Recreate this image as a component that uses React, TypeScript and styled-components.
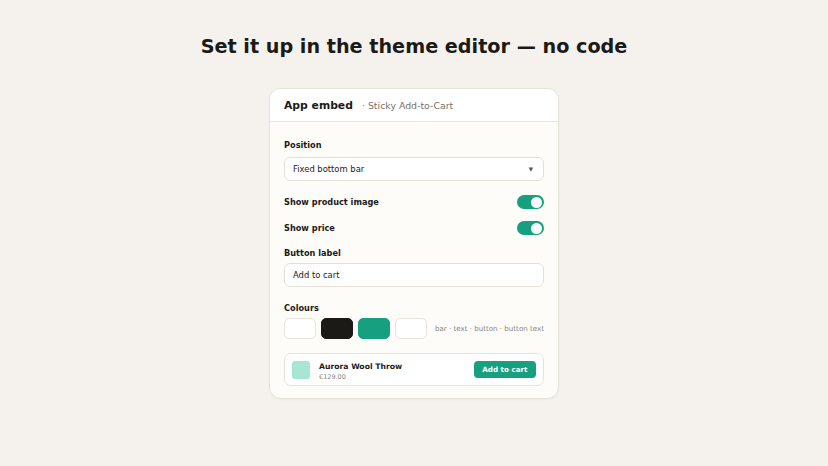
import React from "react";
import styled, { createGlobalStyle } from "styled-components";

const Global = createGlobalStyle`
  html, body { margin: 0; padding: 0; }
  body {
    background: #f5f2ed;
    font-family: "DejaVu Sans", Verdana, sans-serif;
    color: #1c1a17;
  }
`;

const Page = styled.div`
  width: 828px;
  height: 466px;
  display: flex;
  flex-direction: column;
  align-items: center;
  box-sizing: border-box;
  padding-top: 36px;
`;

const Title = styled.h1`
  margin: 0 0 30px;
  font-size: 19.2px;
  line-height: 22px;
  font-weight: 700;
  color: #1c1a17;
`;

const Card = styled.div`
  width: 290px;
  box-sizing: border-box;
  border: 1px solid #e7e2d9;
  border-radius: 12px;
  background: #fdfcf8;
  overflow: hidden;
  box-shadow: 0 1px 2px rgba(0, 0, 0, 0.03);
`;

const Header = styled.div`
  display: flex;
  align-items: center;
  gap: 9px;
  height: 32px;
  padding: 0 14px;
  background: #ffffff;
  border-bottom: 1px solid #ece7de;
`;

const HeaderTitle = styled.span`
  font-size: 10.8px;
  font-weight: 700;
`;

const HeaderSub = styled.span`
  font-size: 9.4px;
  color: #77726a;
`;

const Body = styled.div`
  display: flex;
  flex-direction: column;
  padding: 18px 14px 12px;
`;

const Label = styled.div<{ $gap?: number }>`
  font-size: 8.2px;
  font-weight: 700;
  line-height: 11px;
  margin-bottom: ${(p) => p.$gap ?? 6}px;
`;

const Field = styled.div<{ $after?: number }>`
  display: flex;
  align-items: center;
  justify-content: space-between;
  height: 24px;
  box-sizing: border-box;
  padding: 0 10px 0 8px;
  border: 1px solid #e5e0d7;
  border-radius: 6px;
  background: #ffffff;
  font-size: 8.4px;
  color: #1c1a17;
  margin-bottom: ${(p) => p.$after ?? 12}px;
`;

const Caret = styled.span`
  font-size: 5.5px;
  color: #555;
`;

const ToggleRow = styled.div<{ $after?: number }>`
  display: flex;
  align-items: center;
  justify-content: space-between;
  height: 14px;
  margin-bottom: ${(p) => p.$after ?? 12}px;
  font-size: 8.2px;
  font-weight: 700;
`;

const Toggle = styled.span`
  position: relative;
  width: 27px;
  height: 14px;
  border-radius: 7px;
  background: #17a080;

  &::after {
    content: "";
    position: absolute;
    right: 2px;
    top: 1.5px;
    width: 11px;
    height: 11px;
    border-radius: 50%;
    background: #ffffff;
  }
`;

const SwatchRow = styled.div`
  display: flex;
  align-items: center;
  gap: 5px;
  margin-bottom: 14px;
`;

const Swatch = styled.span<{ $color: string }>`
  width: 32px;
  height: 21px;
  box-sizing: border-box;
  border-radius: 5px;
  background: ${(p) => p.$color};
  border: 1px solid ${(p) => (p.$color === "#ffffff" ? "#e8e3da" : p.$color)};
`;

const SwatchLegend = styled.span`
  margin-left: auto;
  white-space: nowrap;
  font-size: 7.1px;
  color: #8a857d;
`;

const Preview = styled.div`
  display: flex;
  align-items: center;
  height: 33px;
  box-sizing: border-box;
  padding: 0 7px;
  border: 1px solid #e8e3da;
  border-radius: 7px;
  background: #ffffff;
`;

const Thumb = styled.span`
  width: 18px;
  height: 18px;
  border-radius: 3px;
  background: #a6e6d2;
  margin-right: 9px;
`;

const Info = styled.div`
  display: flex;
  flex-direction: column;
  gap: 2px;
  margin-top: 4px;
`;

const Name = styled.span`
  font-size: 7.7px;
  font-weight: 700;
`;

const Price = styled.span`
  font-size: 6.5px;
  color: #8a857d;
`;

const CartButton = styled.span`
  margin-left: auto;
  height: 17px;
  padding: 0 8.5px;
  display: flex;
  align-items: center;
  border-radius: 4px;
  background: #17a080;
  color: #ffffff;
  font-size: 7.2px;
  font-weight: 700;
`;

export default function App() {
  return (
    <>
      <Global />
      <Page>
        <Title>Set it up in the theme editor — no code</Title>
        <Card>
          <Header>
            <HeaderTitle>App embed</HeaderTitle>
            <HeaderSub>· Sticky Add-to-Cart</HeaderSub>
          </Header>
          <Body>
            <Label>Position</Label>
            <Field $after={14}>
              <span>Fixed bottom bar</span>
              <Caret>▼</Caret>
            </Field>
            <ToggleRow>
              <span>Show product image</span>
              <Toggle />
            </ToggleRow>
            <ToggleRow $after={13}>
              <span>Show price</span>
              <Toggle />
            </ToggleRow>
            <Label $gap={4}>Button label</Label>
            <Field $after={16}>
              <span>Add to cart</span>
            </Field>
            <Label $gap={4}>Colours</Label>
            <SwatchRow>
              <Swatch $color="#ffffff" />
              <Swatch $color="#1c1a17" />
              <Swatch $color="#17a080" />
              <Swatch $color="#ffffff" />
              <SwatchLegend>bar · text · button · button text</SwatchLegend>
            </SwatchRow>
            <Preview>
              <Thumb />
              <Info>
                <Name>Aurora Wool Throw</Name>
                <Price>€129.00</Price>
              </Info>
              <CartButton>Add to cart</CartButton>
            </Preview>
          </Body>
        </Card>
      </Page>
    </>
  );
}
